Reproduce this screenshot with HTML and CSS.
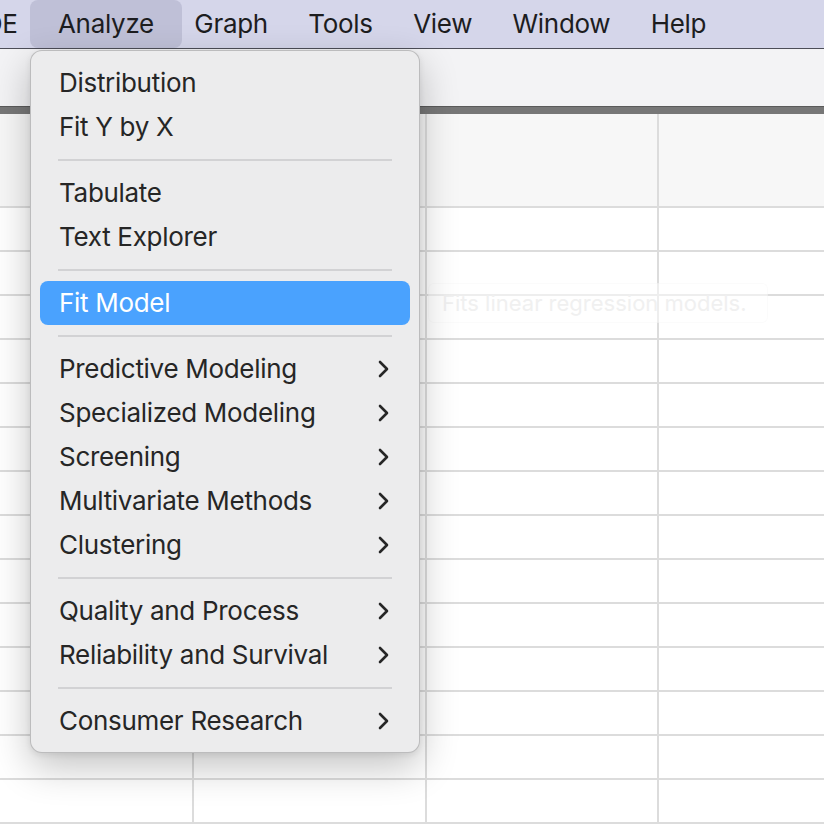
FILE: index.html
```html
<!DOCTYPE html>
<html>
<head>
<meta charset="utf-8">
<link rel="stylesheet" href="styles.css">
</head>
<body>
<div class="app">
  <nav class="menubar">
    <span class="mb-item mb-first">DOE</span>
    <span class="mb-item mb-active">Analyze</span>
    <span class="mb-item">Graph</span>
    <span class="mb-item">Tools</span>
    <span class="mb-item">View</span>
    <span class="mb-item">Window</span>
    <span class="mb-item">Help</span>
  </nav>
  <div class="toolbar"></div>
  <div class="divider"></div>
  <div class="grid">
    <div class="row head"><div class="cell c1"></div><div class="cell c2"></div><div class="cell c3"></div><div class="cell c4"></div></div>
    <div class="row"><div class="cell c1"></div><div class="cell c2"></div><div class="cell c3"></div><div class="cell c4"></div></div>
    <div class="row"><div class="cell c1"></div><div class="cell c2"></div><div class="cell c3"></div><div class="cell c4"></div></div>
    <div class="row"><div class="cell c1"></div><div class="cell c2"></div><div class="cell c3"></div><div class="cell c4"></div></div>
    <div class="row"><div class="cell c1"></div><div class="cell c2"></div><div class="cell c3"></div><div class="cell c4"></div></div>
    <div class="row"><div class="cell c1"></div><div class="cell c2"></div><div class="cell c3"></div><div class="cell c4"></div></div>
    <div class="row"><div class="cell c1"></div><div class="cell c2"></div><div class="cell c3"></div><div class="cell c4"></div></div>
    <div class="row"><div class="cell c1"></div><div class="cell c2"></div><div class="cell c3"></div><div class="cell c4"></div></div>
    <div class="row"><div class="cell c1"></div><div class="cell c2"></div><div class="cell c3"></div><div class="cell c4"></div></div>
    <div class="row"><div class="cell c1"></div><div class="cell c2"></div><div class="cell c3"></div><div class="cell c4"></div></div>
    <div class="row"><div class="cell c1"></div><div class="cell c2"></div><div class="cell c3"></div><div class="cell c4"></div></div>
    <div class="row"><div class="cell c1"></div><div class="cell c2"></div><div class="cell c3"></div><div class="cell c4"></div></div>
    <div class="row"><div class="cell c1"></div><div class="cell c2"></div><div class="cell c3"></div><div class="cell c4"></div></div>
    <div class="row"><div class="cell c1"></div><div class="cell c2"></div><div class="cell c3"></div><div class="cell c4"></div></div>
    <div class="row"><div class="cell c1"></div><div class="cell c2"></div><div class="cell c3"></div><div class="cell c4"></div></div>
  </div>

  <div class="tooltip">Fits linear regression models.</div>

  <div class="menu">
    <div class="mi">Distribution</div>
    <div class="mi">Fit Y by X</div>
    <div class="sep"></div>
    <div class="mi">Tabulate</div>
    <div class="mi">Text Explorer</div>
    <div class="sep"></div>
    <div class="mi sel">Fit Model</div>
    <div class="sep"></div>
    <div class="mi sub">Predictive Modeling<svg class="chev" viewBox="0 0 11 18"><path d="M2 2 L9 9 L2 16"/></svg></div>
    <div class="mi sub">Specialized Modeling<svg class="chev" viewBox="0 0 11 18"><path d="M2 2 L9 9 L2 16"/></svg></div>
    <div class="mi sub">Screening<svg class="chev" viewBox="0 0 11 18"><path d="M2 2 L9 9 L2 16"/></svg></div>
    <div class="mi sub">Multivariate Methods<svg class="chev" viewBox="0 0 11 18"><path d="M2 2 L9 9 L2 16"/></svg></div>
    <div class="mi sub">Clustering<svg class="chev" viewBox="0 0 11 18"><path d="M2 2 L9 9 L2 16"/></svg></div>
    <div class="sep"></div>
    <div class="mi sub">Quality and Process<svg class="chev" viewBox="0 0 11 18"><path d="M2 2 L9 9 L2 16"/></svg></div>
    <div class="mi sub">Reliability and Survival<svg class="chev" viewBox="0 0 11 18"><path d="M2 2 L9 9 L2 16"/></svg></div>
    <div class="sep"></div>
    <div class="mi sub">Consumer Research<svg class="chev" viewBox="0 0 11 18"><path d="M2 2 L9 9 L2 16"/></svg></div>
  </div>
</div>
</body>
</html>
```

FILE: styles.css
```css
* { box-sizing: border-box; }
html, body { margin: 0; padding: 0; }
body {
  width: 824px;
  height: 834px;
  overflow: hidden;
  background: #ffffff;
  font-family: "Inter", "Noto Sans", sans-serif;
  color: #222222;
}
.app { position: relative; width: 824px; height: 834px; overflow: hidden; }

.menubar {
  display: flex;
  align-items: stretch;
  height: 49px;
  background: #d5d6ea;
  border-bottom: 1px solid #4d4e58;
  font-size: 26px;
  letter-spacing: -0.3px;
  color: #1d1d1f;
  white-space: nowrap;
}
.mb-item {
  display: flex;
  align-items: center;
  padding: 0 20.2px 1px;
}
.mb-first { margin-left: -56px; }
.mb-active {
  padding: 0 28px 1px;
  margin: 0 -7.8px;
  background: #bfc0d7;
  border-radius: 8px;
}

.toolbar { height: 57px; background: #f3f3f5; }
.divider {
  height: 8px;
  background: #777777;
  border-top: 1px solid #5a5a5a;
}

.grid { display: flex; flex-direction: column; }
.row { display: flex; height: 44px; }
.row.head { height: 94px; background: #f7f7f7; }
.cell {
  border-right: 2px solid #dcdcdc;
  border-bottom: 2px solid #dcdcdc;
  flex: none;
}
.c1 { width: 194px; }
.c2 { width: 233px; }
.c3 { width: 232px; }
.c4 { flex: 1; border-right: none; }

.tooltip {
  position: absolute;
  left: 428px;
  top: 283px;
  width: 340px;
  height: 40px;
  padding-left: 13px;
  display: flex;
  align-items: center;
  font-size: 22px;
  color: #f0f0f0;
  background: rgba(255,255,255,0.5);
  border: 1px solid rgba(0,0,0,0.015);
  border-radius: 6px;
}

.menu {
  position: absolute;
  left: 30px;
  top: 50px;
  width: 390px;
  padding: 10px 9px 9px;
  background: #ececed;
  border: 1px solid rgba(0,0,0,0.2);
  border-radius: 12px;
  box-shadow: 0 14px 38px rgba(0,0,0,0.24), 0 2px 6px rgba(0,0,0,0.08);
  font-size: 26px;
  letter-spacing: -0.3px;
  color: #262626;
}
.mi {
  height: 44px;
  display: flex;
  align-items: center;
  justify-content: space-between;
  padding: 0 21px 1px 19px;
  border-radius: 8px;
  white-space: nowrap;
}
.mi.sel { background: #4aa2fe; color: #ffffff; }
.sep {
  height: 22px;
  margin: 0 18px;
  display: flex;
  align-items: center;
}
.sep::before {
  content: "";
  display: block;
  width: 100%;
  height: 2px;
  background: #d2d2d4;
}
.chev { width: 11px; height: 18px; flex: none; }
.chev path { fill: none; stroke: #262626; stroke-width: 2.6; stroke-linecap: round; stroke-linejoin: round; }
```
